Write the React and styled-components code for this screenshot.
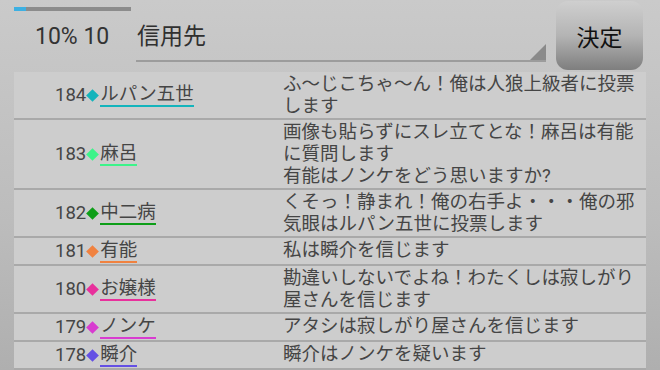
import React from 'react'
import styled, { createGlobalStyle } from 'styled-components';

const posts = [
    { no: 184, name: 'ルパン五世', color: '#14b4bc', text: 'ふ～じこちゃ～ん！俺は人狼上級者に投票します' },
    { no: 183, name: '麻呂', color: '#3cf48a', text: '画像も貼らずにスレ立てとな！麻呂は有能に質問します\n有能はノンケをどう思いますか?' },
    { no: 182, name: '中二病', color: '#0e9e18', text: 'くそっ！静まれ！俺の右手よ・・・俺の邪気眼はルパン五世に投票します' },
    { no: 181, name: '有能', color: '#f08240', text: '私は瞬介を信じます' },
    { no: 180, name: 'お嬢様', color: '#e8309c', text: '勘違いしないでよね！わたくしは寂しがり屋さんを信じます' },
    { no: 179, name: 'ノンケ', color: '#d83cd0', text: 'アタシは寂しがり屋さんを信じます' },
    { no: 178, name: '瞬介', color: '#6450e4', text: '瞬介はノンケを疑います' },
];

function App() {
    return (
        <>
            <GlobalStyle />
            <Screen>
                <Header>
                    <Status>
                        <Track><Fill style={{ width: '10%' }} /></Track>
                        <Count>10% 10</Count>
                    </Status>
                    <Field>
                        <FieldText>信用先</FieldText>
                        <Corner />
                    </Field>
                    <Decide>決定</Decide>
                </Header>
                <List>
                    {posts.map((p) => (
                        <Row key={p.no}>
                            <Speaker>
                                <span>{p.no}</span>
                                <Diamond $color={p.color} />
                                <Name $color={p.color}>{p.name}</Name>
                            </Speaker>
                            <Message>{p.text}</Message>
                        </Row>
                    ))}
                </List>
            </Screen>
        </>
    )
}

const GlobalStyle = createGlobalStyle`
    html, body {
        margin: 0;
        padding: 0;
    }
    body {
        font-family: Roboto, "Noto Sans CJK JP", sans-serif;
        background: linear-gradient(180deg, #cacaca 0%, #bcbcbc 60%, #afafaf 100%);
        width: 660px;
        height: 370px;
        overflow: hidden;
    }
`;

const Screen = styled.div`
    width: 660px;
    height: 370px;
    display: flex;
    flex-direction: column;
    overflow: hidden;
`;

const Header = styled.div`
    height: 72px;
    display: flex;
    padding-left: 14px;
    flex-shrink: 0;
`;

const Status = styled.div`
    width: 122px;
    display: flex;
    flex-direction: column;
`;

const Track = styled.div`
    margin-top: 7px;
    width: 117px;
    height: 4px;
    background: #8c8c8c;
`;

const Fill = styled.div`
    height: 100%;
    background: #3db0e2;
`;

const Count = styled.div`
    margin-top: 12px;
    padding-left: 21px;
    font-size: 23px;
    color: #333;
`;

const Field = styled.div`
    position: relative;
    width: 410px;
    height: 60px;
    border-bottom: 2px solid #9c9c9c;
`;

const FieldText = styled.div`
    padding: 17px 0 0 1px;
    font-size: 23px;
    color: #303030;
`;

const Corner = styled.div`
    position: absolute;
    right: 0;
    bottom: 0;
    width: 0;
    height: 0;
    border-left: 16px solid transparent;
    border-bottom: 16px solid #8a8a8a;
`;

const Decide = styled.button`
    margin: 1px 0 0 10px;
    width: 87px;
    height: 69px;
    border: none;
    border-radius: 12px;
    background: linear-gradient(180deg, #cfcfcf 0%, #b4b4b4 50%, #7e7e7e 100%);
    font-family: Roboto, "Noto Sans CJK JP", sans-serif;
    font-size: 23px;
    color: #111;
    padding: 0;
`;

const List = styled.div`
    margin: 0 14px;
    background: #cdcdcd;
    display: flex;
    flex-direction: column;
`;

const Row = styled.div`
    display: grid;
    grid-template-columns: 269px 1fr;
    padding: 1px 0;
    border-bottom: 2px solid #a9a9a9;
`;

const Speaker = styled.div`
    display: flex;
    align-items: center;
    padding-left: 41px;
    font-size: 18.5px;
    line-height: 22px;
    color: #454545;
`;

const Diamond = styled.span`
    display: inline-block;
    width: 9px;
    height: 9px;
    margin: 0 3px 0 2px;
    background: ${(p) => p.$color};
    transform: rotate(45deg);
`;

const Name = styled.span`
    display: inline-block;
    line-height: 22px;
    border-bottom: 2px solid ${(p) => p.$color};
`;

const Message = styled.div`
    font-size: 18.5px;
    line-height: 22px;
    color: #454545;
    white-space: pre-line;
    padding-right: 6px;
`;

export default App;
